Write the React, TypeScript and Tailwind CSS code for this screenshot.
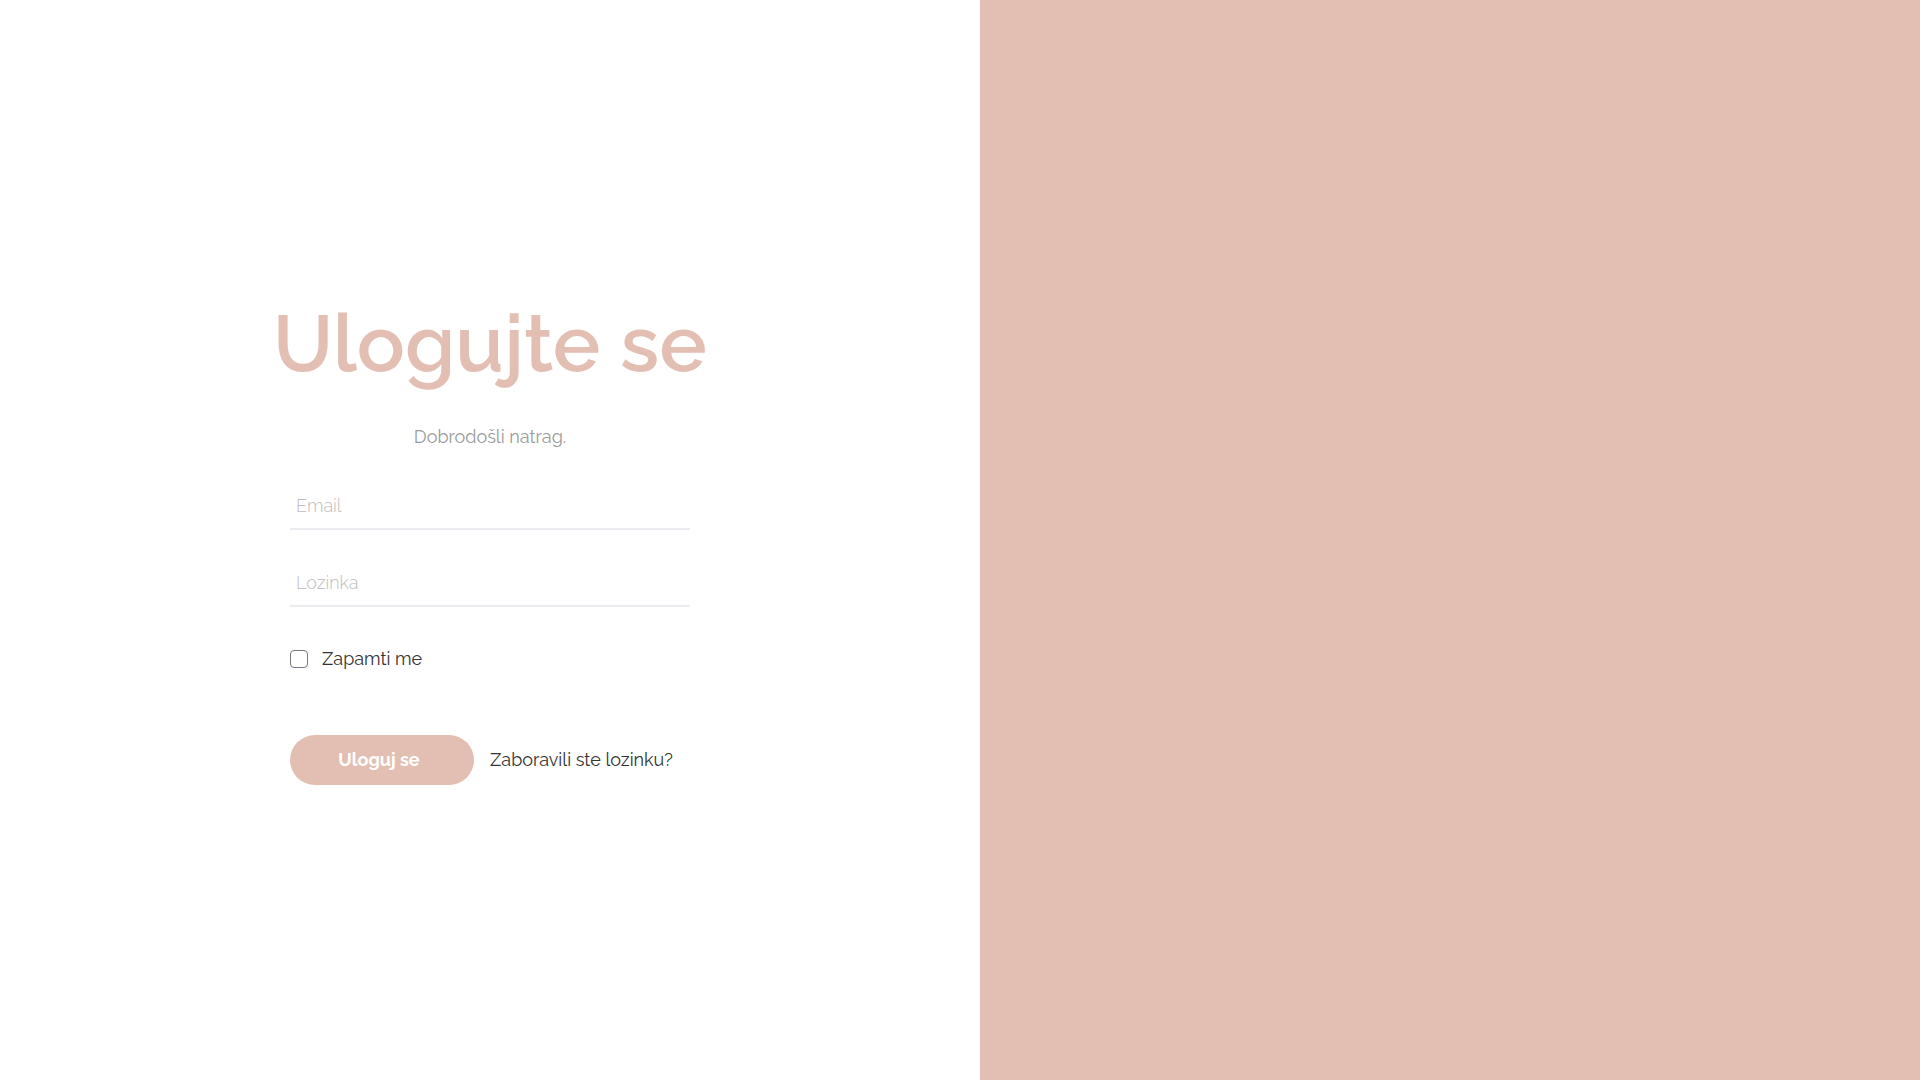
import { useState } from "react";

const font = { fontFamily: "Raleway, Lato, 'Open Sans', sans-serif" };

export default function App() {
  const [remember, setRemember] = useState(false);

  return (
    <div className="flex h-screen w-full bg-white" style={font}>
      <div className="flex w-[980px] flex-col items-center justify-center pt-[8px]">
        <h1 className="text-[80px] font-semibold leading-none text-[#e3bfb3]">Ulogujte se</h1>
        <p className="mt-[39px] text-lg text-[#9a9a9a]">Dobrodošli natrag.</p>

        <form className="mt-[33px] w-[400px]" onSubmit={(e) => e.preventDefault()}>
          <input
            type="email"
            placeholder="Email"
            className="block w-full border-b-2 border-[#ebebf0] px-[6px] py-[8px] text-lg font-light text-[#333] outline-none placeholder:text-[#bdbdbd]"
          />
          <input
            type="password"
            placeholder="Lozinka"
            className="mt-[31px] block w-full border-b-2 border-[#ebebf0] px-[6px] py-[8px] text-lg font-light text-[#333] outline-none placeholder:text-[#bdbdbd]"
          />

          <label className="mt-[38px] flex items-center gap-[14px] text-lg text-[#333]">
            <input
              type="checkbox"
              checked={remember}
              onChange={(e) => setRemember(e.target.checked)}
              className="h-[18px] w-[18px] appearance-none rounded-[4px] border border-[#767688] bg-white"
            />
            Zapamti me
          </label>

          <div className="mt-[62px] flex items-center gap-[16px]">
            <button
              type="submit"
              className="h-[50px] w-[184px] rounded-full bg-[#e3bfb3] pr-[6px] text-lg font-bold text-white"
            >
              Uloguj se
            </button>
            <a href="#" className="text-lg text-[#333]">
              Zaboravili ste lozinku?
            </a>
          </div>
        </form>
      </div>
      <div className="flex-1 bg-[#e3bfb3]" />
    </div>
  );
}
